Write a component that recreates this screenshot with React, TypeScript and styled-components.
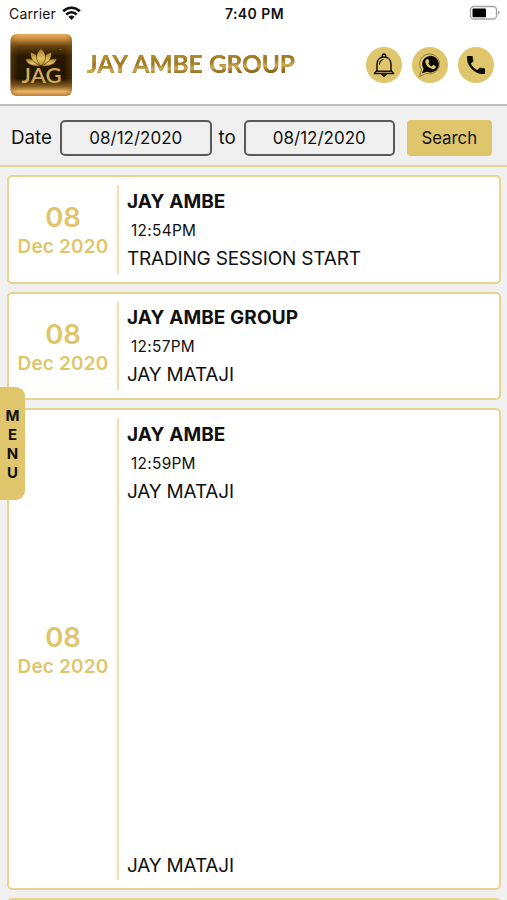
import React from "react";
import styled, { createGlobalStyle } from "styled-components";

const gold = "#dfc56c";
const line = "#e8d490";

const GlobalStyle = createGlobalStyle`
  * { box-sizing: border-box; }
  html, body { margin: 0; padding: 0; background: #f0f0f0; }
  body { overflow: hidden; font-family: Inter, "Liberation Sans", sans-serif; color: #111; }
`;

const Screen = styled.div`
  position: relative;
  width: 507px;
  height: 900px;
  overflow: hidden;
  background: #f0f0f0;
`;

const StatusBar = styled.div`
  height: 28px;
  padding: 0 7px 0 9px;
  display: grid;
  grid-template-columns: 1fr auto 1fr;
  align-items: center;
  background: #fff;
  font-size: 14px;
  line-height: 28px;
`;
const Carrier = styled.div`
  display: flex;
  align-items: center;
  gap: 6px;
  letter-spacing: 0.15px;

  svg { margin-top: -2px; }
`;
const Clock = styled.div`
  font-weight: 600;
  font-size: 14px;
  letter-spacing: 0.45px;
`;
const BatterySlot = styled.div`
  display: flex;
  justify-content: flex-end;
  margin-top: -2px;
`;

const Header = styled.header`
  height: 78px;
  padding: 6px 13px 8px 10px;
  display: flex;
  align-items: flex-start;
  background: #fff;
  border-bottom: 2px solid #bdbdbd;
`;
const Wordmark = styled.h1`
  margin: 13px 0 0 15px;
  flex: 1;
  font-family: Lato, sans-serif;
  font-weight: 700;
  font-size: 24.5px;
  line-height: 34px;
  letter-spacing: -0.1px;
  word-spacing: 0.5px;
  white-space: nowrap;
`;
const GoldText = styled.span`
  color: transparent;
  background: linear-gradient(178deg, #b98c22 26%, #a37619 42%, #b1852a 53%, #cfae4b 63%, #b08528 70%, #8f6a1c 78%);
  background-clip: text;
  -webkit-background-clip: text;
  filter: drop-shadow(0.7px 0.7px 0.3px rgba(85, 72, 40, 0.75));
`;
const Actions = styled.div`
  display: flex;
  gap: 10px;
  margin-top: 13px;
`;
const RoundButton = styled.button`
  width: 36px;
  height: 36px;
  padding: 0;
  border: 0;
  border-radius: 50%;
  display: grid;
  place-items: center;
  background: ${gold};
`;

const FilterBar = styled.form`
  height: 61px;
  padding: 14px 15px 0 11px;
  display: flex;
  align-items: flex-start;
  border-bottom: 2px solid ${line};
`;
const FilterLabel = styled.span<{ $width: number; $indent?: number }>`
  width: ${(p) => p.$width}px;
  padding-left: ${(p) => p.$indent ?? 0}px;
  font-size: 18.8px;
  line-height: 35px;
`;
const DateField = styled.button`
  width: 151.5px;
  height: 36px;
  padding: 0;
  border: 2px solid #5a5a5a;
  border-radius: 5px;
  background: transparent;
  color: #111;
  font-family: inherit;
  font-size: 17px;
`;
const SearchButton = styled.button`
  width: 85.5px;
  height: 36px;
  margin-left: auto;
  padding: 0;
  border: 0;
  border-radius: 4px;
  background: ${gold};
  color: #111;
  font-family: inherit;
  font-size: 16.8px;
`;

const Feed = styled.main`
  padding: 8.4px 6px 0 7px;
  display: flex;
  flex-direction: column;
  gap: 8px;
`;
const Card = styled.article<{ $height: number }>`
  height: ${(p) => p.$height}px;
  flex: none;
  padding: 8px;
  display: flex;
  background: #fff;
  border: 2px solid ${line};
  border-radius: 5px;
`;
const DateColumn = styled.div`
  width: 100px;
  padding: 3px 8px 0 0;
  display: flex;
  flex-direction: column;
  align-items: center;
  justify-content: center;
  color: ${gold};
  font-weight: 600;
  white-space: nowrap;
`;
const Divider = styled.div`
  width: 2px;
  flex: none;
  background: #efe0ab;
`;
const Day = styled.div`
  font-size: 27.5px;
  line-height: 32px;
`;
const Month = styled.div`
  font-size: 19px;
  line-height: 28px;
  letter-spacing: 0.15px;
`;
const Content = styled.div`
  flex: 1;
  padding: 0.6px 0 0 8px;
  display: flex;
  flex-direction: column;
`;
const Title = styled.h2`
  margin: 0;
  font-size: 19px;
  font-weight: 700;
  line-height: 31px;
  letter-spacing: 0.08px;
`;
const Time = styled.div`
  padding-left: 4px;
  font-size: 15.4px;
  line-height: 27px;
  letter-spacing: 0.3px;
`;
const Message = styled.p<{ $last?: boolean }>`
  margin: ${(p) => (p.$last ? "auto 0 -1px" : "0")};
  font-size: 19px;
  line-height: 30px;
  letter-spacing: -0.2px;
`;

const MenuTab = styled.nav`
  position: absolute;
  left: 0;
  top: 387px;
  width: 25px;
  height: 113px;
  border-radius: 0 9px 9px 0;
  display: flex;
  flex-direction: column;
  align-items: center;
  justify-content: center;
  background: ${gold};
  font-size: 15px;
  font-weight: 700;
  line-height: 19px;
`;

const Logo = () => (
  <svg width="62" height="63" viewBox="0 0 62 63">
    <defs>
      <linearGradient id="plate" x1="0" y1="0" x2="0" y2="1">
        <stop offset="0" stopColor="#e6a957" />
        <stop offset="0.06" stopColor="#d79a48" />
        <stop offset="0.2" stopColor="#63410f" />
        <stop offset="0.36" stopColor="#281800" />
        <stop offset="0.72" stopColor="#241500" />
        <stop offset="0.84" stopColor="#845b20" />
        <stop offset="0.93" stopColor="#edb665" />
        <stop offset="1" stopColor="#b87e36" />
      </linearGradient>
      <linearGradient id="edge" x1="0" y1="0" x2="1" y2="0">
        <stop offset="0" stopColor="#8a5b18" stopOpacity=".4" />
        <stop offset="0.12" stopColor="#8a5b18" stopOpacity="0" />
        <stop offset="0.88" stopColor="#8a5b18" stopOpacity="0" />
        <stop offset="1" stopColor="#8a5b18" stopOpacity=".4" />
      </linearGradient>
      <linearGradient id="leaf" x1="0" y1="0" x2="0" y2="1">
        <stop offset="0" stopColor="#a67a28" />
        <stop offset="0.6" stopColor="#e2c263" />
        <stop offset="1" stopColor="#b68a34" />
      </linearGradient>
    </defs>
    <rect x="0.5" y="0" width="61.5" height="62" rx="6" fill="url(#plate)" />
    <rect x="0.5" y="0" width="61.5" height="62" rx="6" fill="url(#edge)" />
    <g fill="url(#leaf)" stroke="#382305" strokeWidth=".6">
      <path d="M31 32C22 33 17 30 15.500 25C22 24 28 27 31 32Z" />
      <path d="M31 32C40 33 45 30 47 25C40 24 34 27 31 32Z" />
      <path d="M31 32C23 29 20 24 20.500 18C27 20 30 25 31 32Z" />
      <path d="M31 32C39 29 42 24 41.500 18C35 20 32 25 31 32Z" />
      <path d="M31 32C25 26 25 20 31 14.500C37 20 37 26 31 32Z" />
    </g>
    <text x="11.500" y="49" fontFamily="Lato, sans-serif" fontWeight="600" fontSize="20.500" textLength="40" lengthAdjust="spacingAndGlyphs" fill="#cfaa53">JAG</text>
    <path d="M49.500 15.500h2" stroke="#8e7140" strokeWidth=".7" />
  </svg>
);

const Wifi = () => (
  <svg width="19" height="15" viewBox="0 0 19 15" fill="none" stroke="#111" strokeWidth="2.700">
    <path d="M1.200 5.200C6 .6 13 .6 17.800 5.200" />
    <path d="M4.200 8.500C7.400 5.500 11.600 5.500 14.800 8.500" />
    <path d="M6.400 10.800C8.300 9.200 10.700 9.200 12.600 10.800L9.500 14Z" fill="#111" stroke="none" />
  </svg>
);

const Battery = () => (
  <svg width="31" height="16" viewBox="0 0 31 16">
    <rect x="1.500" y="1.500" width="26" height="12.500" rx="3.500" fill="#fff" stroke="#a3a3a3" strokeWidth="1.300" />
    <rect x="3.500" y="3.500" width="13.500" height="8.800" rx="1" fill="#000" />
    <path d="M28.800 5.500Q32.500 7.800 28.800 10Z" fill="#a3a3a3" />
  </svg>
);

const Bell = () => (
  <svg width="24" height="28" viewBox="0 0 24 28" fill="none" stroke="#17140a" strokeWidth="1.500" strokeLinejoin="round" strokeLinecap="round">
    <g transform="translate(0 .8)">
      <path d="M10.300 5V4a1.700 1.700 0 0 1 3.400 0V5" />
      <path d="M5 19V12.500C5 7.800 8 5.300 12 5.300S19 7.800 19 12.500V19" />
      <path d="M7.500 12.500C7.700 10 9 8.200 11 7.700" strokeWidth="1.100" />
      <path d="M5 18.500L2.300 21.800H21.700L19 18.500M4.800 19.500H19.200" />
      <path d="M9.300 22.500Q12 27 14.700 22.500Z" fill="#17140a" strokeWidth=".8" />
    </g>
  </svg>
);

const WhatsApp = () => (
  <svg width="24" height="26" viewBox="0 0 24 26">
    <path d="M1.500 24.500L3.400 17.500A9.900 9.900 0 1 1 8.500 21.300Z" fill="none" stroke="#5a4f2e" strokeWidth=".9" strokeDasharray="1 .35" />
    <path d="M4 21.200L5.600 16.800A8.300 8.300 0 1 1 9 19.700Z" fill="#080705" />
    <path d="M8.300 7.600C9.300 6.600 10.200 6.700 10.700 8L11.300 9.700C11.500 10.200 10.700 10.900 10.300 11.300C11 12.900 12.100 13.900 13.700 14.400L14.900 13.200C15.300 12.800 17.800 14.100 17.800 14.500C17.900 16.200 16.200 17.300 14.500 16.900C10.800 16.200 8.100 13.700 7.400 10.500C7.200 9.300 7.500 8.300 8.300 7.600Z" fill={gold} />
  </svg>
);

const Phone = () => (
  <svg width="18" height="18" viewBox="3 3 18 18">
    <path d="M6.620 10.790c1.440 2.830 3.760 5.140 6.590 6.590l2.200-2.200c.27-.27.67-.36 1.020-.24 1.120.37 2.330.57 3.570.57.55 0 1 .45 1 1V20c0 .55-.45 1-1 1-9.390 0-17-7.610-17-17 0-.55.45-1 1-1h3.500c.55 0 1 .45 1 1 0 1.250.2 2.450.57 3.570.11.35.03.74-.25 1.020l-2.200 2.200z" fill="#0b0a06" stroke="#0b0a06" strokeWidth=".5" />
  </svg>
);

type Entry = { title: string; time: string; lines: string[]; height: number };

const entries: Entry[] = [
  { title: "JAY AMBE", time: "12:54PM", lines: ["TRADING SESSION START"], height: 108.5 },
  { title: "JAY AMBE GROUP", time: "12:57PM", lines: ["JAY MATAJI"], height: 108.5 },
  { title: "JAY AMBE", time: "12:59PM", lines: ["JAY MATAJI", "JAY MATAJI"], height: 481.5 },
  { title: "", time: "", lines: [], height: 108.5 },
];

export default function App() {
  return (
    <Screen>
      <GlobalStyle />
      <StatusBar>
        <Carrier>Carrier<Wifi /></Carrier>
        <Clock>7:40 PM</Clock>
        <BatterySlot><Battery /></BatterySlot>
      </StatusBar>
      <Header>
        <Logo />
        <Wordmark><GoldText>JAY AMBE GROUP</GoldText></Wordmark>
        <Actions>
          <RoundButton aria-label="Notifications"><Bell /></RoundButton>
          <RoundButton aria-label="WhatsApp"><WhatsApp /></RoundButton>
          <RoundButton aria-label="Call"><Phone /></RoundButton>
        </Actions>
      </Header>
      <FilterBar>
        <FilterLabel $width={49}>Date</FilterLabel>
        <DateField type="button">08/12/2020</DateField>
        <FilterLabel $width={32} $indent={7}>to</FilterLabel>
        <DateField type="button">08/12/2020</DateField>
        <SearchButton type="button">Search</SearchButton>
      </FilterBar>
      <Feed>
        {entries.map((e, i) => (
          <Card key={i} $height={e.height}>
            {e.title && (
              <>
                <DateColumn>
                  <Day>08</Day>
                  <Month>Dec 2020</Month>
                </DateColumn>
                <Divider />
                <Content>
                  <Title>{e.title}</Title>
                  <Time>{e.time}</Time>
                  {e.lines.map((text, n) => (
                    <Message key={n} $last={n > 0}>{text}</Message>
                  ))}
                </Content>
              </>
            )}
          </Card>
        ))}
      </Feed>
      <MenuTab aria-label="Menu">
        {"MENU".split("").map((c) => <span key={c}>{c}</span>)}
      </MenuTab>
    </Screen>
  );
}
